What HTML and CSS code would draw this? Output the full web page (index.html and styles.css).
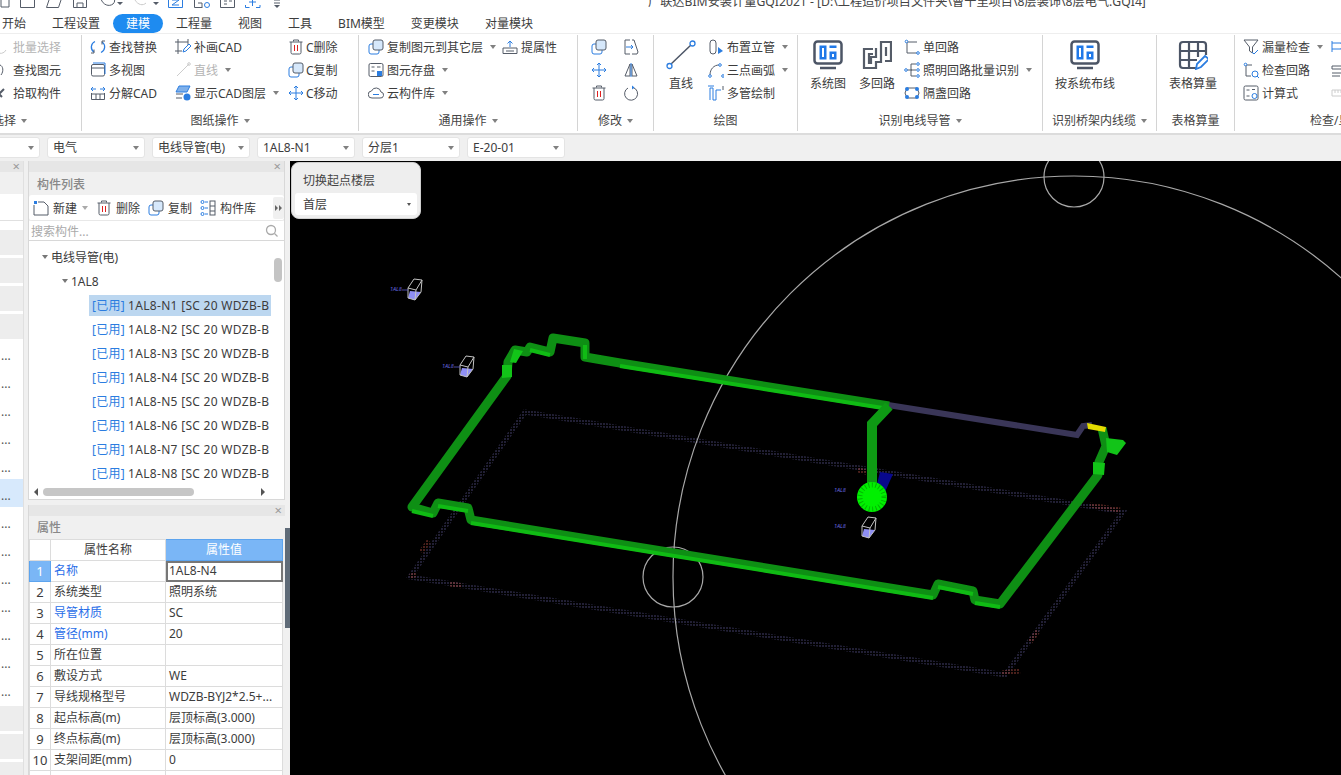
FILE: index.html
```html
<!DOCTYPE html>
<html lang="zh-CN">
<head>
  <meta charset="UTF-8" />
  <title>广联达BIM安装计量GQI2021</title>
  <link rel="stylesheet" href="styles.css">
</head>
<body>

  <svg class="defs" width="0" height="0">
    <defs>
      <symbol id="i-trash" viewBox="0 0 16 16"><path d="M5.5 2.5V1h5v1.500M1.500 3h13M3 3v10.500A1.500 1.500 0 0 0 4.500 15h7a1.500 1.500 0 0 0 1.500-1.500V3" fill="none" stroke="#555c68"/><path d="M6.500 6v6M9.500 6v6" stroke="#e02020"/></symbol>
      <symbol id="i-copy" viewBox="0 0 16 16"><rect x="1" y="5" width="10" height="10" rx="2" fill="#fff" stroke="#2b7de0"/><rect x="5" y="1" width="10" height="10" rx="2" fill="#d6e8fb" stroke="#555c68"/></symbol>
      <symbol id="i-move" viewBox="0 0 16 16"><path d="M8 1v14M1 8h14M6 3l2-2 2 2M6 13l2 2 2-2M3 6L1 8l2 2M13 6l2 2-2 2" fill="none" stroke="#2b7de0"/></symbol>
      <symbol id="i-screen" viewBox="0 0 30 30"><rect x="1.500" y="1.500" width="27" height="22" rx="3" fill="none" stroke="#4c5566" stroke-width="2.500"/><path d="M7 28h16" stroke="#4c5566" stroke-width="2.500"/><path d="M6.500 5.500h7v14h-7zM9 8v9h2V8z" fill="#1f78e8" fill-rule="evenodd"/><path d="M16.500 5.500h7v2.500h-7zM16.500 11.500h7v8h-7zm2.500 2.500v3h2v-3z" fill="#1f78e8" fill-rule="evenodd"/></symbol>
    </defs>
  </svg>

  <div class="titlebar">
    <svg class="quick" width="300" height="9" viewBox="0 0 300 9">
      <g fill="none" stroke="#555c68">
        <path d="M1-2v9h8V-2"/>
        <path d="M20.500-2v9.500h14V-2"/>
        <path d="M46.500 7.500l3-9h12l-3 9z"/>
        <path d="M73.500-2v9.500h13V-2M77 7.500V3h6v4.500"/>
        <path d="M101-1c2 6 8 8 12 5 2-2 2-4 1-6"/>
        <path d="M135 0c3 5 8 6 11 3" stroke="#ccc"/>
        <path d="M168.500-2v9.500h14V-2M172 0h7l-7 5h7" stroke="#2b7de0"/>
        <path d="M194.500-2v9.500h8M198 3h4v4"/>
        <circle cx="207" cy="5" r="2.500" stroke="#2b7de0"/>
        <path d="M220.500-2v9.500h14V-2M224 1h3M224 4h3M229 1h3"/>
        <path d="M245.500 5v2.500h4M256 7.500h4V5M252.500-2v8M249 2h7" stroke="#2b7de0"/>
      </g>
      <path d="M117 2h6l-3 3zM153 2h6l-3 3z" fill="#555c68"/>
      <path d="M274 0h6M274 3h6" stroke="#555c68"/>
      <path d="M274 5h6l-3 3z" fill="#555c68"/>
    </svg>
    <div class="app-title">广联达BIM安装计量GQI2021 - [D:\工程造价项目文件夹\曹十里项目\8层装饰\8层电气.GQI4]</div>
  </div>

  <div class="tabs">
    <span class="tab">开始</span>
    <span class="tab">工程设置</span>
    <span class="tab active">建模</span>
    <span class="tab">工程量</span>
    <span class="tab">视图</span>
    <span class="tab">工具</span>
    <span class="tab">BIM模型</span>
    <span class="tab">变更模块</span>
    <span class="tab">对量模块</span>
  </div>

  <div class="ribbon">
    <!-- 选择 -->
    <section class="group g-select">
      <div class="group-body">
        <div class="col">
          <div class="item off"><svg class="ic" viewBox="0 0 16 16"><path d="M4 3a6 6 0 1 0 8 8" fill="none" stroke="#ccc"/></svg>批量选择</div>
          <div class="item"><svg class="ic" viewBox="0 0 16 16"><path d="M6 3c3 1 4 6 1 10" fill="none" stroke="#555c68"/></svg>查找图元</div>
          <div class="item"><svg class="ic" viewBox="0 0 16 16"><path d="M2 12l8-8M2 6l6 6" stroke="#555c68" stroke-width="2"/></svg>拾取构件</div>
        </div>
      </div>
      <div class="group-label">选择<i class="caret"></i></div>
    </section>

    <!-- 图纸操作 -->
    <section class="group g-drawing">
      <div class="group-body">
        <div class="col w85">
          <div class="item"><svg class="ic" viewBox="0 0 16 16"><path d="M5 2.500A6 6 0 0 0 4 13M11 13.500A6 6 0 0 0 12 3" fill="none" stroke="#2b7de0" stroke-width="1.300"/><path d="M4 10.500V14H1M12 5.500V2h3" fill="none" stroke="#555c68"/></svg>查找替换</div>
          <div class="item"><svg class="ic" viewBox="0 0 16 16"><rect x="1.500" y="2.500" width="13" height="11.500" rx="1.500" fill="none" stroke="#555c68"/><path d="M1.500 6h13" stroke="#555c68"/><path d="M3 1h12v11" fill="none" stroke="#2b7de0"/></svg>多视图</div>
          <div class="item"><svg class="ic" viewBox="0 0 16 16"><path d="M1.500 8v6.500h13V8M6 9v5M10 9v5M1.500 9h13" fill="none" stroke="#555c68"/><path d="M1 4h5M10 4h5M3 2L1 4l2 2M13 2l2 2-2 2" fill="none" stroke="#2b7de0"/></svg>分解CAD</div>
        </div>
        <div class="col w113">
          <div class="item"><svg class="ic" viewBox="0 0 16 16"><path d="M3 0v15M0 3h13M0 12h7M13 0v6" fill="none" stroke="#555c68"/><path d="M8 13l1-3 5-5 2 2-5 5z" fill="none" stroke="#2b7de0"/></svg>补画CAD</div>
          <div class="item off"><svg class="ic" viewBox="0 0 16 16"><path d="M2 14L14 2" stroke="#ccc"/><circle cx="14" cy="2" r="1.300" fill="none" stroke="#ccc"/></svg>直线<i class="caret tail"></i></div>
          <div class="item"><svg class="ic" viewBox="0 0 16 16"><path d="M4 1h11l-3 6H1z" fill="#7fb0ea" stroke="#2b7de0"/><path d="M1 9h7M1 13h6" stroke="#555c68"/><circle cx="12" cy="12" r="3.500" fill="#2b7de0"/></svg>显示CAD图层<i class="caret tail"></i></div>
        </div>
        <div class="col tight">
          <div class="item"><svg class="ic"><use href="#i-trash"/></svg>C删除</div>
          <div class="item"><svg class="ic"><use href="#i-copy"/></svg>C复制</div>
          <div class="item"><svg class="ic"><use href="#i-move"/></svg>C移动</div>
        </div>
      </div>
      <div class="group-label">图纸操作<i class="caret"></i></div>
    </section>

    <!-- 通用操作 -->
    <section class="group g-common">
      <div class="group-body">
        <div class="col w134">
          <div class="item"><svg class="ic"><use href="#i-copy"/></svg>复制图元到其它层<i class="caret tail"></i></div>
          <div class="item"><svg class="ic" viewBox="0 0 16 16"><rect x="1" y="1.500" width="14" height="13" rx="1.500" fill="none" stroke="#555c68"/><path d="M3.500 5h3M9 5h3.500M3.500 9h3" stroke="#555c68"/><rect x="9" y="9" width="5" height="5" fill="#2b7de0"/></svg>图元存盘<i class="caret tail"></i></div>
          <div class="item"><svg class="ic" viewBox="0 0 16 16"><path d="M4 13a3.500 3.500 0 0 1-.5-7A5 5 0 0 1 13 7a3 3 0 0 1-1 6z" fill="none" stroke="#555c68"/><path d="M5 9.500h6" stroke="#2b7de0"/></svg>云构件库<i class="caret tail"></i></div>
        </div>
        <div class="col">
          <div class="item"><svg class="ic" viewBox="0 0 16 16"><path d="M1 9h14v5.500H1zM4 12h8" fill="none" stroke="#555c68"/><path d="M8 8V2M5.500 4.500L8 2l2.500 2.500" fill="none" stroke="#2b7de0"/></svg>提属性</div>
        </div>
      </div>
      <div class="group-label">通用操作<i class="caret"></i></div>
    </section>

    <!-- 修改 -->
    <section class="group g-modify">
      <div class="group-body icon-grid">
        <svg class="ic"><use href="#i-copy"/></svg>
        <svg class="ic" viewBox="0 0 16 16"><path d="M7 1H2v14h5M9 1h2l4 12-1 2H9" fill="none" stroke="#555c68"/><path d="M3 8h7M8 6l2 2-2 2" fill="none" stroke="#2b7de0"/></svg>
        <svg class="ic"><use href="#i-move"/></svg>
        <svg class="ic" viewBox="0 0 16 16"><path d="M7 2v12H2zM9 2v12h5z" fill="none" stroke="#555c68"/><path d="M8 1v14" stroke="#2b7de0"/></svg>
        <svg class="ic"><use href="#i-trash"/></svg>
        <svg class="ic" viewBox="0 0 16 16"><path d="M10 2.500A6.500 6.500 0 1 1 5 3" fill="none" stroke="#555c68"/><path d="M9 .5l2.500 2L9 4.500z" fill="#2b7de0"/></svg>
      </div>
      <div class="group-label">修改<i class="caret"></i></div>
    </section>

    <!-- 绘图 -->
    <section class="group g-draw">
      <div class="group-body">
        <div class="big w28">
          <svg class="ic-big" viewBox="0 0 30 30"><path d="M4 25L26 4" stroke="#4c5566" stroke-width="1.500"/><circle cx="3.500" cy="26" r="2.500" fill="#fff" stroke="#2b7de0" stroke-width="1.300"/><circle cx="26.500" cy="3.500" r="2.500" fill="#fff" stroke="#2b7de0" stroke-width="1.300"/></svg>
          直线
        </div>
        <div class="col">
          <div class="item"><svg class="ic" viewBox="0 0 16 16"><rect x="2" y="1" width="6" height="14" rx="3" fill="none" stroke="#555c68"/><path d="M10 8l5 4-5 3z" fill="#2b7de0"/></svg>布置立管<i class="caret tail"></i></div>
          <div class="item"><svg class="ic" viewBox="0 0 16 16"><path d="M2 13C2 7 6 3 11 3" fill="none" stroke="#555c68"/><circle cx="2" cy="14" r="1.300" fill="#fff" stroke="#2b7de0"/><circle cx="12" cy="3" r="1.300" fill="#fff" stroke="#2b7de0"/><circle cx="15" cy="14" r="1.300" fill="#fff" stroke="#2b7de0"/></svg>三点画弧<i class="caret tail"></i></div>
          <div class="item"><svg class="ic" viewBox="0 0 16 16"><path d="M0 1h6M2 15V3h3v12M5 15h3V5h5" fill="none" stroke="#2b7de0"/><path d="M15 1v4" stroke="#555c68"/></svg>多管绘制</div>
        </div>
      </div>
      <div class="group-label">绘图</div>
    </section>

    <!-- 识别电线导管 -->
    <section class="group g-wire">
      <div class="group-body">
        <div class="big w36"><svg class="ic-big"><use href="#i-screen"/></svg>系统图</div>
        <div class="big w36">
          <svg class="ic-big" viewBox="0 0 30 30"><path d="M11 9H2v19h12v-6h5V2h10v19h-6M11 14H7v9h2v-6h5V8M24 7v9" fill="none" stroke="#555c68" stroke-width="2.200"/></svg>
          多回路
        </div>
        <div class="col">
          <div class="item"><svg class="ic" viewBox="0 0 16 16"><path d="M3 3h10M3 3v11h12" fill="none" stroke="#555c68"/><circle cx="2.500" cy="2.500" r="1.300" fill="#fff" stroke="#2b7de0"/><circle cx="14" cy="14" r="1.300" fill="#fff" stroke="#2b7de0"/></svg>单回路</div>
          <div class="item"><svg class="ic" viewBox="0 0 16 16"><path d="M2 8h6M7 2h5M7 2v12M7 14h5M7 8h5" fill="none" stroke="#555c68"/><circle cx="2" cy="8" r="1.300" fill="#fff" stroke="#2b7de0"/><circle cx="14" cy="2" r="1.300" fill="#fff" stroke="#2b7de0"/><circle cx="14" cy="8" r="1.300" fill="#fff" stroke="#2b7de0"/><circle cx="14" cy="14" r="1.300" fill="#fff" stroke="#2b7de0"/></svg>照明回路批量识别<i class="caret tail"></i></div>
          <div class="item"><svg class="ic" viewBox="0 0 16 16"><path d="M3 3h10l2 5-2 5H3L1 8z" fill="none" stroke="#555c68"/><circle cx="3" cy="4" r="2" fill="#2b7de0"/><circle cx="13" cy="4" r="2" fill="#2b7de0"/><circle cx="3" cy="12" r="2" fill="#2b7de0"/><circle cx="13" cy="12" r="2" fill="#2b7de0"/></svg>隔盏回路</div>
        </div>
      </div>
      <div class="group-label">识别电线导管<i class="caret"></i></div>
    </section>

    <!-- 识别桥架内线缆 -->
    <section class="group g-tray">
      <div class="group-body">
        <div class="big w60"><svg class="ic-big"><use href="#i-screen"/></svg>按系统布线</div>
      </div>
      <div class="group-label">识别桥架内线缆<i class="caret"></i></div>
    </section>

    <!-- 表格算量 -->
    <section class="group g-table">
      <div class="group-body">
        <div class="big w48">
          <svg class="ic-big" viewBox="0 0 30 30"><path d="M21 28H5a3 3 0 0 1-3-3V5a3 3 0 0 1 3-3h20a3 3 0 0 1 3 3v10M2 11h26M2 20h17M11 2v26M20 2v15" fill="none" stroke="#4c5566" stroke-width="2.200"/><path d="M18 29l1-5 8-8 4 3-8 8z" fill="#fff" stroke="#2b7de0" stroke-width="1.800"/></svg>
          表格算量
        </div>
      </div>
      <div class="group-label">表格算量</div>
    </section>

    <!-- 检查 -->
    <section class="group g-check">
      <div class="group-body">
        <div class="col w88">
          <div class="item"><svg class="ic" viewBox="0 0 16 16"><path d="M1 1h14L9.500 8v6L6.500 12V8z" fill="none" stroke="#555c68"/><path d="M9 13l2 2 4-4" fill="none" stroke="#2b7de0"/></svg>漏量检查<i class="caret tail"></i></div>
          <div class="item"><svg class="ic" viewBox="0 0 16 16"><path d="M3 3h6M3 3v11h5" fill="none" stroke="#555c68"/><circle cx="2.500" cy="2.500" r="1.300" fill="#fff" stroke="#2b7de0"/><circle cx="12" cy="12" r="3" fill="none" stroke="#2b7de0"/><path d="M14 14l2 2" stroke="#2b7de0"/></svg>检查回路</div>
          <div class="item"><svg class="ic" viewBox="0 0 16 16"><rect x="1" y="1" width="14" height="14" rx="1.500" fill="none" stroke="#555c68"/><path d="M3.500 5h3M3.500 11h3M9 4.500h3" stroke="#555c68"/><circle cx="11.500" cy="11" r="2.500" fill="#fff" stroke="#2b7de0"/></svg>计算式</div>
        </div>
        <div class="col">
          <div class="item"><svg class="ic" viewBox="0 0 16 16"><path d="M1 2v11M1 4h9l1 3-1 3H1" fill="none" stroke="#2b7de0"/></svg></div>
          <div class="item"><svg class="ic" viewBox="0 0 16 16"><path d="M1 4h12v3H1zM1 11h12M1 14h8" fill="none" stroke="#555c68"/></svg></div>
          <div class="item"><svg class="ic" viewBox="0 0 16 16"><path d="M1 5h12v6H1zM4 5v3M7 5v3M10 5v3" fill="none" stroke="#ccc"/></svg></div>
        </div>
      </div>
      <div class="group-label left">检查/显示</div>
    </section>
  </div>

  <div class="selector-bar">
    <div class="select"><i class="caret"></i></div>
    <div class="select">电气<i class="caret"></i></div>
    <div class="select">电线导管(电)<i class="caret"></i></div>
    <div class="select">1AL8-N1<i class="caret"></i></div>
    <div class="select">分层1<i class="caret"></i></div>
    <div class="select">E-20-01<i class="caret"></i></div>
  </div>

  <div class="workspace">
    <!-- 导航栏 -->
    <aside class="nav-panel">
      <div class="panel-close"><span>×</span></div>
      <div class="nav-title"></div>
      <div class="nav-tools"></div>
      <div class="nav-row gray"></div>
      <div class="nav-row gray"></div>
      <div class="nav-row gray"></div>
      <div class="nav-row gray"></div>
      <div class="nav-row">...</div>
      <div class="nav-row">...</div>
      <div class="nav-row">...</div>
      <div class="nav-row">...</div>
      <div class="nav-row">...</div>
      <div class="nav-row on">...</div>
      <div class="nav-row">...</div>
      <div class="nav-row">...</div>
      <div class="nav-row">...</div>
      <div class="nav-row">...</div>
      <div class="nav-row">...</div>
      <div class="nav-row">...</div>
      <div class="nav-row">...</div>
      <div class="nav-row gray"></div>
      <div class="nav-row gray"></div>
      <div class="nav-row gray"></div>
    </aside>

    <div class="side-column">
      <!-- 构件列表 -->
      <section class="list-panel">
        <div class="panel-close"><span>×</span></div>
        <div class="panel-title">构件列表</div>
        <div class="list-tools">
          <span class="tool"><svg class="ic" viewBox="0 0 16 16"><path d="M5 2h6l4 4v9H1V5" fill="none" stroke="#555c68"/><path d="M1 1h3v3H1z" fill="#2b7de0"/></svg>新建<i class="caret"></i></span>
          <span class="tool"><svg class="ic"><use href="#i-trash"/></svg>删除</span>
          <span class="tool"><svg class="ic"><use href="#i-copy"/></svg>复制</span>
          <span class="tool"><svg class="ic" viewBox="0 0 16 16"><path d="M5 2h3M5 8h3M5 14h3" stroke="#2b7de0"/><circle cx="2.500" cy="2" r="1.500" fill="none" stroke="#2b7de0"/><circle cx="2.500" cy="8" r="1.500" fill="none" stroke="#2b7de0"/><circle cx="2.500" cy="14" r="1.500" fill="none" stroke="#2b7de0"/><rect x="10" y="1" width="5" height="14" fill="none" stroke="#555c68"/><path d="M10 6h5M10 11h5" stroke="#555c68"/></svg>构件库</span>
          <span class="more"><svg width="7" height="6" viewBox="0 0 7 6"><path d="M0 0l3 3-3 3zM4 0l3 3-3 3z" fill="#666"/></svg></span>
        </div>
        <div class="search">
          <span>搜索构件...</span>
          <svg width="14" height="14" viewBox="0 0 14 14"><circle cx="6" cy="6" r="4.500" fill="none" stroke="#aaa" stroke-width="1.300"/><path d="M9.500 9.500l3 3" stroke="#aaa" stroke-width="1.300"/></svg>
        </div>
        <div class="tree">
          <div class="tree-row lv1"><i class="caret"></i>电线导管(电)</div>
          <div class="tree-row lv2"><i class="caret"></i>1AL8</div>
          <div class="tree-row lv3"><div class="leaf selected"><em>[已用]</em>1AL8-N1 [SC 20 WDZB-B</div></div>
          <div class="tree-row lv3"><div class="leaf"><em>[已用]</em>1AL8-N2 [SC 20 WDZB-B</div></div>
          <div class="tree-row lv3"><div class="leaf"><em>[已用]</em>1AL8-N3 [SC 20 WDZB-B</div></div>
          <div class="tree-row lv3"><div class="leaf"><em>[已用]</em>1AL8-N4 [SC 20 WDZB-B</div></div>
          <div class="tree-row lv3"><div class="leaf"><em>[已用]</em>1AL8-N5 [SC 20 WDZB-B</div></div>
          <div class="tree-row lv3"><div class="leaf"><em>[已用]</em>1AL8-N6 [SC 20 WDZB-B</div></div>
          <div class="tree-row lv3"><div class="leaf"><em>[已用]</em>1AL8-N7 [SC 20 WDZB-B</div></div>
          <div class="tree-row lv3"><div class="leaf"><em>[已用]</em>1AL8-N8 [SC 20 WDZB-B</div></div>
          <div class="vscroll"></div>
          <div class="hscroll"><i class="arrow-l"></i><div class="hthumb"></div><i class="arrow-r"></i></div>
        </div>
      </section>

      <!-- 属性 -->
      <section class="prop-panel">
        <div class="panel-close"><span>×</span></div>
        <div class="panel-title short">属性</div>
        <table class="prop-table">
          <thead>
            <tr><th class="idx"></th><th class="name">属性名称</th><th class="val">属性值</th></tr>
          </thead>
          <tbody>
            <tr><td class="idx on">1</td><td class="link">名称</td><td class="editing">1AL8-N4</td></tr>
            <tr><td class="idx">2</td><td>系统类型</td><td>照明系统</td></tr>
            <tr><td class="idx">3</td><td class="link">导管材质</td><td>SC</td></tr>
            <tr><td class="idx">4</td><td class="link">管径(mm)</td><td>20</td></tr>
            <tr><td class="idx">5</td><td>所在位置</td><td></td></tr>
            <tr><td class="idx">6</td><td>敷设方式</td><td>WE</td></tr>
            <tr><td class="idx">7</td><td>导线规格型号</td><td>WDZB-BYJ2*2.5+...</td></tr>
            <tr><td class="idx">8</td><td>起点标高(m)</td><td>层顶标高(3.000)</td></tr>
            <tr><td class="idx">9</td><td>终点标高(m)</td><td>层顶标高(3.000)</td></tr>
            <tr><td class="idx">10</td><td>支架间距(mm)</td><td>0</td></tr>
            <tr><td class="idx"></td><td></td><td></td></tr>
          </tbody>
        </table>
      </section>
    </div>

    <div class="splitter"></div>

    <!-- 三维视图 -->
    <main class="viewport">
      <svg class="scene" width="1051" height="614" viewBox="290 161 1051 614">
        <defs>
          <pattern id="dots" width="3" height="3" patternUnits="userSpaceOnUse"><circle cx="1" cy="1" r=".7" fill="#5a5490"/></pattern>
          <pattern id="dots-red" width="3" height="3" patternUnits="userSpaceOnUse"><circle cx="1" cy="1" r=".8" fill="#a8483c"/></pattern>
          <g id="marker">
            <path d="M-7 9l2-7 11 1-6 8z" fill="#8f8ff5"/>
            <path d="M-7-1l6-9 8 1-1 12-6 8-7-2zM-7-1l8 2 6-10M1 1l-1 10" fill="none" stroke="#c4c4c4"/>
          </g>
        </defs>

        <rect x="290" y="161" width="1051" height="614" fill="#000"/>

        <path d="M525 412L1123 512 1005 675 410 577z" fill="none" stroke="url(#dots)" stroke-width="5"/>
        <path d="M421 552l8-11M410 577l6-3M450 584l12 2M858 470l12 3M1090 505l30 5M1002 673l18-2M1030 642l8-11" fill="none" stroke="url(#dots-red)" stroke-width="5"/>

        <circle cx="1074" cy="577" r="401" fill="none" stroke="#a8a8a8" stroke-width="1.200"/>
        <circle cx="1074" cy="177" r="30" fill="none" stroke="#a8a8a8" stroke-width="1.200"/>
        <circle cx="673" cy="577" r="30" fill="none" stroke="#a8a8a8" stroke-width="1.200"/>

        <path d="M880 472l13 2-8 18-9-4z" fill="#08088c"/>

        <!-- 灰色未选中段 -->
        <path d="M888 405L1077 435 1083 426 1092 425" fill="none" stroke="#3a3658" stroke-width="6"/>

        <!-- 绿色导管 -->
        <path d="M889 406L620 363 585 357 585 343 553 338 550 352 530 347 527 352 515 350 508 362 507 376 412 507 433 513 438 503 468 508 471 520 933 595 938 584 973 591 975 600 1000 604 1098 475 1099 462 1106 446 1102 428" fill="none" stroke="#0e8f14" stroke-width="9" stroke-linejoin="round"/>
        <path d="M889 409L620 366M585 359L585 345M550 355L530 350M412 511L433 516M438 506L468 511M471 523L933 598M938 587L973 594M975 603L1000 607" fill="none" stroke="#10bb14" stroke-width="4"/>
        <path d="M502 365h10v12l-10 1zM514 349l9 2-7 12-6-1zM1093 462l12 1-1 12-11-1zM1106 438l17 2 3 3-9 12-10-3z" fill="#12c418"/>
        <path d="M1087 423l19 4-1 5-17-3z" fill="#e4dc00"/>

        <path d="M889 406L872 424V486" fill="none" stroke="#0e9a14" stroke-width="10"/>
        <circle cx="872" cy="497" r="15" fill="#00f000"/>
        <circle cx="872" cy="497" r="12" fill="none" stroke="#00b400" stroke-width="5" stroke-dasharray="1 2.500"/>

        <use href="#marker" x="415" y="289"/>
        <use href="#marker" x="467" y="366"/>
        <use href="#marker" x="869" y="527"/>
        <path d="M402 290h6M454 367h6" stroke="#5a5ac8" stroke-width=".8"/>

        <text class="tag" x="390" y="291">1AL8</text>
        <text class="tag" x="442" y="368">1AL8</text>
        <text class="tag" x="834" y="492">1AL8</text>
        <text class="tag" x="834" y="528">1AL8</text>
      </svg>

      <div class="floor-popup">
        <div class="floor-title">切换起点楼层</div>
        <div class="floor-select">首层<i class="caret"></i></div>
      </div>
    </main>
  </div>

</body>
</html>
```

FILE: styles.css
```css
:root {
  --text-color: #3c3c3c;
  --muted-color: #b4b4b4;
  --blue-color: #2b7de0;
  --panel-color: #f0f0f0;
  --line-color: #d8d8d8;
}

* {
  box-sizing: border-box;
}

body {
  margin: 0;
  width: 1341px;
  height: 775px;
  overflow: hidden;
  display: flex;
  flex-direction: column;
  background: #fff;
  color: var(--text-color);
  font-family: "Noto Sans", "Noto Sans CJK SC", sans-serif;
  font-size: 12px;
}

.defs {
  position: absolute;
}

.caret {
  display: inline-block;
  width: 0;
  height: 0;
  border-left: 3.5px solid transparent;
  border-right: 3.5px solid transparent;
  border-top: 4px solid #808080;
}

/* title bar and tabs */
.titlebar {
  height: 14px;
  flex: none;
  display: flex;
  overflow: hidden;
}

.quick {
  flex: none;
}

.app-title {
  margin: -7px 0 0 348px;
  line-height: 18px;
  font-size: 12.2px;
  white-space: nowrap;
  color: #444;
}

.tabs {
  height: 19px;
  flex: none;
  display: flex;
  margin-left: -11px;
}

.tab {
  padding: 0 13px;
  line-height: 19px;
  white-space: nowrap;
}

.tab.active {
  background: #1e8bf0;
  color: #fff;
  border-radius: 10px;
}

/* ribbon */
.ribbon {
  height: 102px;
  flex: none;
  display: flex;
  border-top: 1px solid #eee;
  border-bottom: 2px solid #dcdcdc;
  overflow: hidden;
}

.group {
  flex: none;
  height: 96px;
  margin-top: 1px;
  display: flex;
  flex-direction: column;
  border-right: 1px solid #d4d4d4;
}

.group-body {
  height: 76px;
  display: flex;
}

.group-label {
  height: 20px;
  line-height: 20px;
  display: flex;
  align-items: center;
  justify-content: center;
  gap: 5px;
  color: #444;
}

.group-label.left {
  justify-content: flex-start;
  padding-left: 75px;
  white-space: nowrap;
}

.g-select { width: 82px; }
.g-select .group-body { margin-left: -6px; }
.g-select .group-label { justify-content: flex-start; margin-left: -8px; }
.g-drawing { width: 277px; }
.g-drawing .group-body { padding-left: 8px; }
.g-common { width: 219px; }
.g-common .group-body { padding-left: 9px; }
.g-modify { width: 76px; }
.g-draw { width: 144px; }
.g-draw .group-body { padding-left: 13px; }
.g-wire { width: 245px; }
.g-wire .group-body { padding-left: 12px; }
.g-tray { width: 114px; }
.g-tray .group-body { padding-left: 12px; }
.g-table { width: 78px; }
.g-table .group-body { padding-left: 12px; }
.g-check { flex: 1; border-right: none; }
.g-check .group-body { padding-left: 8px; }

.col {
  flex: none;
}

.w85 { width: 85px; }
.w88 { width: 88px; }
.w113 { width: 113px; }
.w134 { width: 134px; }
.w28 { width: 28px; margin-right: 13px; }
.w36 { width: 36px; margin-right: 13px; }
.w60 { width: 60px; }
.w48 { width: 48px; }
.w36 + .col { margin-left: -4px; }

.item {
  height: 23px;
  display: flex;
  align-items: center;
  gap: 3px;
  white-space: nowrap;
}

.item.off {
  color: var(--muted-color);
}

.tight .item {
  gap: 2px;
}

.caret.tail {
  margin-left: 4px;
}

.ic {
  width: 16px;
  height: 16px;
  flex: none;
}

.ic-big {
  width: 30px;
  height: 30px;
  display: block;
  margin-bottom: 6px;
}

.big {
  flex: none;
  padding-top: 5px;
  display: flex;
  flex-direction: column;
  align-items: center;
  white-space: nowrap;
  line-height: 16px;
}

.icon-grid {
  padding-left: 13px;
  display: grid;
  grid-template-columns: 16px 16px;
  grid-auto-rows: 23px;
  column-gap: 16px;
  align-items: center;
}

/* selector bar */
.selector-bar {
  height: 26px;
  flex: none;
  margin-left: -58px;
  padding-top: 2px;
  display: flex;
  gap: 7px;
  background: var(--panel-color);
}

.select {
  width: 98px;
  height: 21px;
  padding: 0 5px;
  display: flex;
  align-items: center;
  justify-content: space-between;
  background: #fff;
  border: 1px solid #e4e4e4;
  border-radius: 3px;
  line-height: 19px;
}

.select:first-child {
  justify-content: flex-end;
}

/* workspace */
.workspace {
  flex: 1;
  min-height: 0;
  display: flex;
  background: var(--panel-color);
}

.panel-close {
  height: 11px;
  padding-right: 3px;
  display: flex;
  justify-content: flex-end;
  align-items: center;
  background: #e6e6e6;
  color: #9a9a9a;
  font-size: 13px;
  line-height: 11px;
  flex: none;
}

.nav-panel {
  width: 24px;
  flex: none;
  overflow: hidden;
  background: #fff;
  border-right: 1px solid #e0e0e0;
}

.nav-title {
  height: 22px;
  background: var(--panel-color);
}

.nav-tools {
  height: 27px;
  margin-bottom: 6px;
  background: #fff;
  border-bottom: 1px solid #e0e0e0;
}

.nav-row {
  height: 28px;
  padding-left: 1px;
  line-height: 27px;
  white-space: nowrap;
  overflow: hidden;
  color: #555;
  border-top: 3px solid #fff;
}

.nav-row.gray {
  background: #ededed;
}

.nav-row.on {
  background: #d7e9fc;
  border-top-color: #d7e9fc;
}

.side-column {
  width: 257px;
  margin-left: 4px;
  flex: none;
  display: flex;
  flex-direction: column;
  gap: 5px;
  overflow: hidden;
}

.list-panel {
  height: 339px;
  flex: none;
  display: flex;
  flex-direction: column;
  border: 1px solid var(--line-color);
  border-top: none;
}

.panel-title {
  height: 23px;
  padding: 1px 0 0 8px;
  line-height: 23px;
  font-weight: 500;
  color: #888;
  background: var(--panel-color);
  flex: none;
}

.list-tools {
  height: 26px;
  padding: 1px 0 0 4px;
  display: flex;
  align-items: center;
  gap: 8px;
  background: #fff;
  border-radius: 3px;
  border-bottom: 1px solid #e8e8e8;
  position: relative;
  flex: none;
}

.tool {
  display: flex;
  align-items: center;
  gap: 4px;
  white-space: nowrap;
}

.tool .caret {
  margin-left: 1px;
  border-top-color: #aaa;
}

.more {
  position: absolute;
  right: 0;
  top: 2px;
  width: 11px;
  height: 22px;
  display: flex;
  align-items: center;
  justify-content: center;
  background: var(--panel-color);
  border-radius: 2px;
}

.search {
  height: 20px;
  padding: 1px 5px 0 2px;
  display: flex;
  align-items: center;
  justify-content: space-between;
  color: #aaa;
  background: #fff;
  border-bottom: 1px solid var(--line-color);
  flex: none;
}

.tree {
  flex: 1;
  position: relative;
  padding-top: 4px;
  background: #fff;
  overflow: hidden;
}

.tree-row {
  height: 24px;
  display: flex;
  align-items: center;
  white-space: nowrap;
}

.tree-row .caret {
  margin-right: 3px;
  border-top-color: #777;
}

.lv1 { padding-left: 13px; }
.lv2 { padding-left: 33px; }
.lv3 { padding-left: 60px; }

.leaf {
  width: 182px;
  height: 21px;
  padding-left: 3px;
  line-height: 21px;
  overflow: hidden;
  white-space: nowrap;
  letter-spacing: .3px;
}

.leaf em {
  font-style: normal;
  color: var(--blue-color);
  margin-right: 3px;
}

.leaf.selected {
  background: #bcd7f0;
}

.vscroll {
  position: absolute;
  left: 245px;
  top: 17px;
  width: 8px;
  height: 24px;
  border-radius: 4px;
  background: #c4c4c4;
}

.hscroll {
  position: absolute;
  left: 5px;
  right: 19px;
  bottom: 3px;
  height: 8px;
  display: flex;
  align-items: center;
}

.hthumb {
  width: 152px;
  height: 8px;
  margin-left: 5px;
  border-radius: 4px;
  background: #c6c6c6;
}

.arrow-l,
.arrow-r {
  width: 0;
  height: 0;
  border-top: 4px solid transparent;
  border-bottom: 4px solid transparent;
}

.arrow-l {
  border-right: 4px solid #555;
}

.arrow-r {
  margin-left: 67px;
  border-left: 4px solid #555;
}

.prop-panel {
  flex: 1;
  min-height: 0;
  overflow: hidden;
  border-left: 1px solid var(--line-color);
}

.panel-title.short {
  padding-top: 0;
}

.prop-table {
  width: 254px;
  border-collapse: collapse;
  table-layout: fixed;
  background: #fff;
}

.prop-table th,
.prop-table td {
  height: 21px;
  padding: 0 3px;
  border: 1px solid #dcdcdc;
  font-weight: 400;
  text-align: left;
  line-height: 20px;
  white-space: nowrap;
  overflow: hidden;
}

.prop-table .idx {
  width: 21px;
  padding: 0;
  text-align: center;
  font-size: 13px;
}

.prop-table .name {
  width: 115px;
  text-align: center;
}

.prop-table .val {
  text-align: center;
  color: #fff;
  background: #7ab6f6;
  border-color: #5da4ee;
}

.prop-table .idx.on {
  color: #fff;
  background: #7ab6f6;
  border-color: #5da4ee;
}

.prop-table .link {
  color: #2a6ee8;
}

.prop-table .editing {
  outline: 2px solid #777;
  outline-offset: -2px;
}

.splitter {
  width: 5px;
  flex: none;
  align-self: flex-start;
  height: 100px;
  margin-top: 367px;
  background: #5f6b78;
}

/* 3D view */
.viewport {
  flex: 1;
  position: relative;
  background: #000;
  overflow: hidden;
}

.scene {
  display: block;
}

.tag {
  font-size: 5.5px;
  font-style: italic;
  fill: #6a6ae0;
}

.floor-popup {
  position: absolute;
  left: 1px;
  top: 1px;
  width: 130px;
  height: 57px;
  padding: 9px 3px 0;
  background: #eee;
  border: 1px solid #cfcfcf;
  border-radius: 8px;
}

.floor-title {
  height: 21px;
  padding-left: 8px;
  line-height: 18px;
  color: #444;
}

.floor-select {
  height: 22px;
  padding: 0 6px 0 8px;
  display: flex;
  align-items: center;
  justify-content: space-between;
  background: #fff;
  border-radius: 3px;
}

.floor-select .caret {
  border-left-width: 2.5px;
  border-right-width: 2.5px;
  border-top-width: 3px;
  border-top-color: #555;
}
```
